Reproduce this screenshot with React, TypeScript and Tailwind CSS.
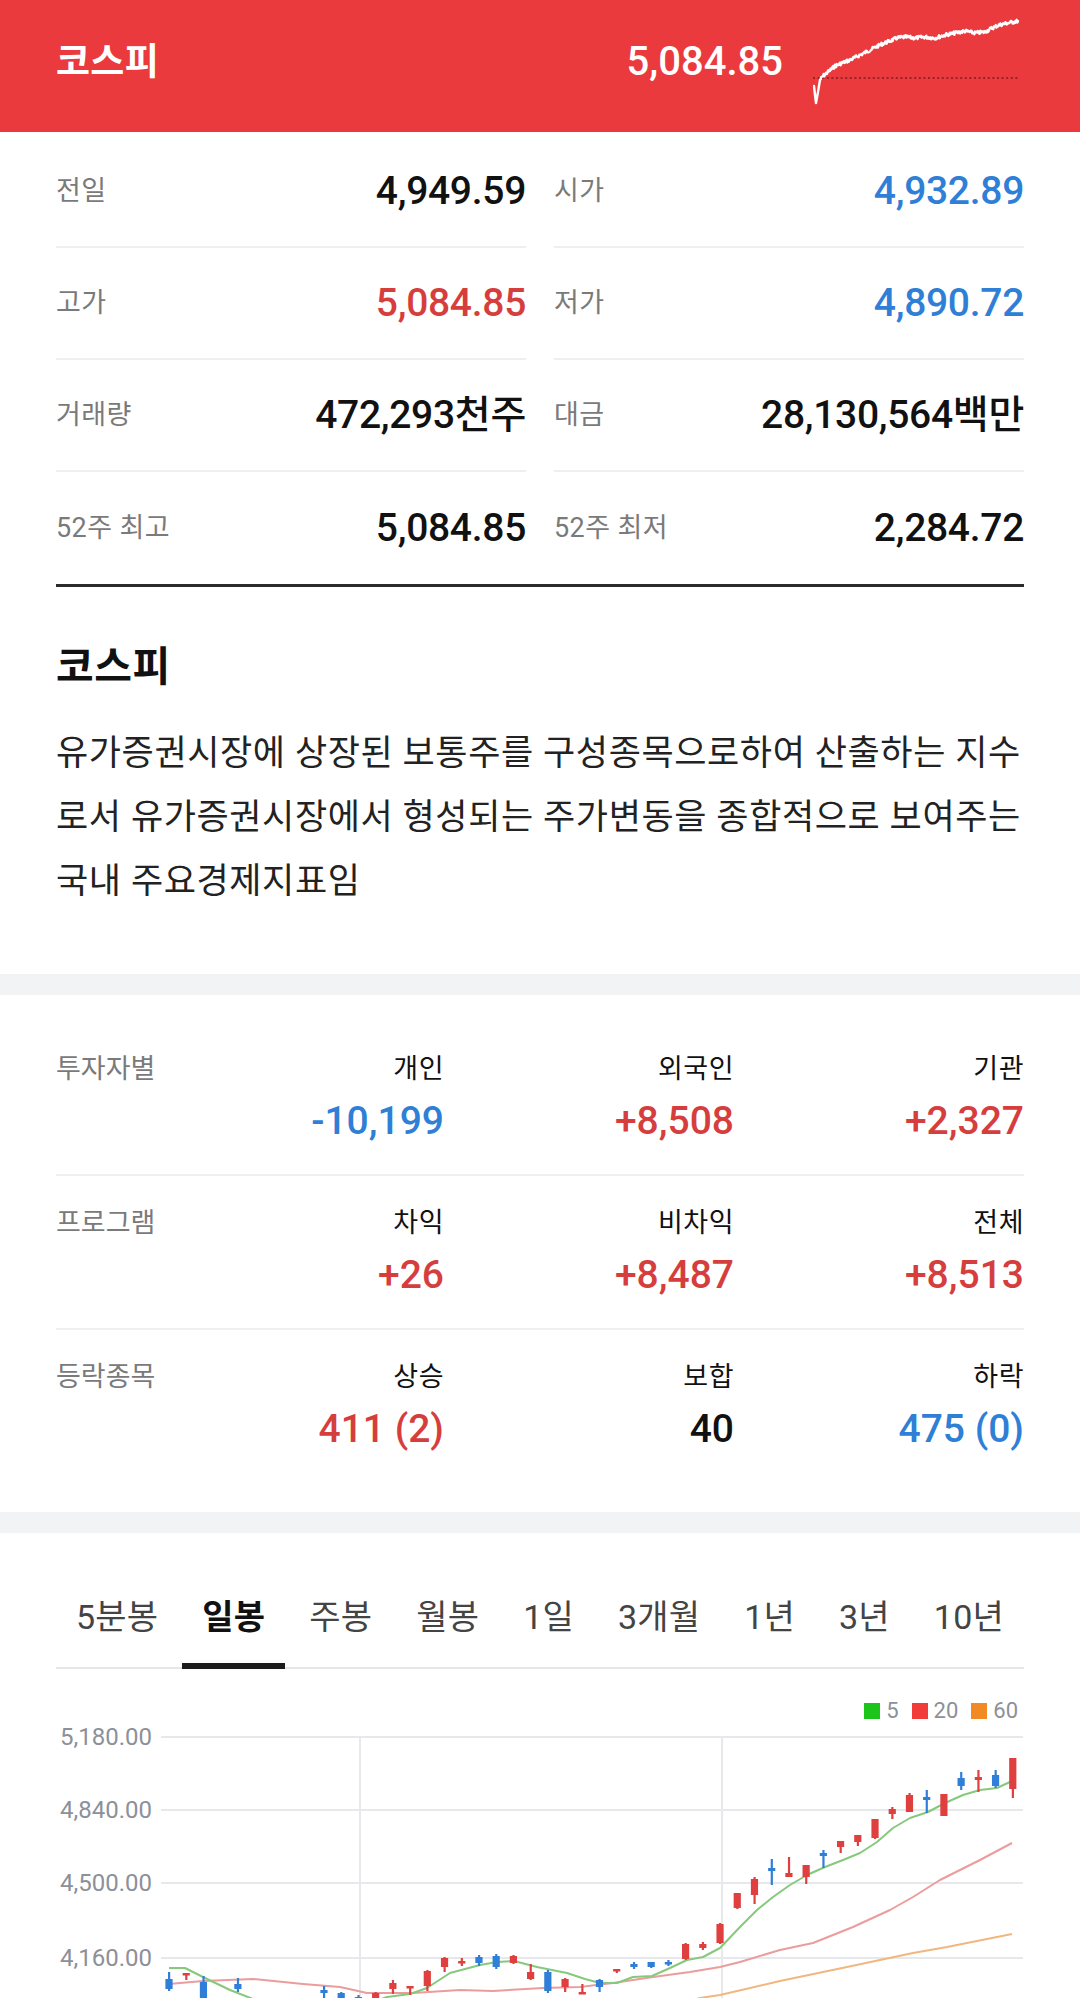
import React from "react";

type Cell = { l: string; v: string; c: string };

const info: Cell[] = [
  { l: "전일", v: "4,949.59", c: "text-[#111111]" },
  { l: "시가", v: "4,932.89", c: "text-[#2f7fd6]" },
  { l: "고가", v: "5,084.85", c: "text-[#d63e3e]" },
  { l: "저가", v: "4,890.72", c: "text-[#2f7fd6]" },
  { l: "거래량", v: "472,293천주", c: "text-[#111111]" },
  { l: "대금", v: "28,130,564백만", c: "text-[#111111]" },
  { l: "52주 최고", v: "5,084.85", c: "text-[#111111]" },
  { l: "52주 최저", v: "2,284.72", c: "text-[#111111]" },
];

const investors = [
  {
    label: "투자자별",
    cols: [
      ["개인", "-10,199", "text-[#2f7fd6]"],
      ["외국인", "+8,508", "text-[#d63e3e]"],
      ["기관", "+2,327", "text-[#d63e3e]"],
    ],
  },
  {
    label: "프로그램",
    cols: [
      ["차익", "+26", "text-[#d63e3e]"],
      ["비차익", "+8,487", "text-[#d63e3e]"],
      ["전체", "+8,513", "text-[#d63e3e]"],
    ],
  },
  {
    label: "등락종목",
    cols: [
      ["상승", "411 (2)", "text-[#d63e3e]"],
      ["보합", "40", "text-[#111111]"],
      ["하락", "475 (0)", "text-[#2f7fd6]"],
    ],
  },
];

const tabs = ["5분봉", "일봉", "주봉", "월봉", "1일", "3개월", "1년", "3년", "10년"];

// candles: [index, color(r/b), bodyTop, bodyBot, wickTop, wickBot]
const candles: [number, string, number, number, number, number][] = [
  [0, "b", 1979, 1989, 1972, 1991],
  [1, "r", 1973, 1975, 1973, 1980],
  [2, "b", 1982, 2005, 1976, 2010],
  [3, "r", 2006, 2016, 2004, 2018],
  [4, "b", 1984, 1989, 1978, 1992],
  [5, "b", 2008, 2018, 2006, 2022],
  [6, "r", 2012, 2020, 2010, 2024],
  [7, "b", 2010, 2016, 2006, 2020],
  [8, "b", 2004, 2012, 2002, 2014],
  [9, "b", 1990, 1993, 1986, 2000],
  [10, "b", 1993, 2003, 1992, 2004],
  [11, "b", 1997, 2005, 1995, 2008],
  [12, "r", 1993, 2005, 1992, 2006],
  [13, "r", 1983, 1989, 1980, 1994],
  [14, "r", 1986, 1988, 1986, 1995],
  [15, "r", 1971, 1986, 1970, 1991],
  [16, "r", 1958, 1967, 1957, 1972],
  [17, "r", 1961, 1963, 1958, 1966],
  [18, "b", 1957, 1963, 1955, 1966],
  [19, "b", 1956, 1967, 1954, 1969],
  [20, "r", 1956, 1963, 1955, 1964],
  [21, "r", 1972, 1979, 1964, 1980],
  [22, "b", 1972, 1991, 1970, 1993],
  [23, "r", 1979, 1987, 1978, 1992],
  [24, "r", 1992, 1994, 1984, 1994],
  [25, "b", 1980, 1987, 1979, 1992],
  [26, "r", 1969, 1971, 1969, 1973],
  [27, "b", 1964, 1967, 1962, 1969],
  [28, "b", 1962, 1967, 1962, 1968],
  [29, "b", 1962, 1964, 1960, 1966],
  [30, "r", 1944, 1959, 1943, 1960],
  [31, "r", 1944, 1948, 1942, 1950],
  [32, "r", 1924, 1943, 1923, 1944],
  [33, "r", 1893, 1908, 1893, 1909],
  [34, "r", 1879, 1895, 1877, 1904],
  [35, "b", 1868, 1871, 1859, 1885],
  [36, "r", 1873, 1877, 1857, 1877],
  [37, "r", 1865, 1877, 1865, 1884],
  [38, "b", 1853, 1856, 1850, 1868],
  [39, "r", 1841, 1847, 1841, 1853],
  [40, "r", 1835, 1842, 1835, 1846],
  [41, "r", 1819, 1838, 1819, 1839],
  [42, "r", 1809, 1814, 1807, 1819],
  [43, "r", 1795, 1812, 1793, 1812],
  [44, "b", 1797, 1800, 1790, 1813],
  [45, "r", 1794, 1816, 1794, 1816],
  [46, "b", 1778, 1786, 1772, 1790],
  [47, "r", 1777, 1780, 1770, 1792],
  [48, "b", 1775, 1786, 1770, 1788],
  [49, "r", 1758, 1789, 1758, 1798],
];

const ma5 = [
  [169, 1968], [185, 1968], [203, 1977], [230, 1990], [253, 1999], [280, 2008], [320, 2012],
  [360, 2006], [387, 1997], [410, 1994], [427, 1988], [450, 1973], [480, 1965], [497, 1962],
  [514, 1961], [537, 1967], [567, 1973], [585, 1979], [600, 1983], [617, 1983], [633, 1977],
  [652, 1976], [670, 1968], [687, 1960], [703, 1957], [720, 1948], [740, 1927], [757, 1910],
  [773, 1897], [790, 1885], [807, 1875], [825, 1867], [843, 1860], [860, 1853], [877, 1842],
  [893, 1828], [910, 1818], [928, 1812], [945, 1803], [963, 1795], [980, 1790], [997, 1788],
  [1012, 1781],
];
const ma20 = [
  [169, 1984], [203, 1981], [253, 1979], [303, 1984], [340, 1987], [367, 1993], [413, 1993],
  [460, 1990], [493, 1991], [543, 1988], [580, 1987], [613, 1983], [653, 1977], [690, 1972],
  [720, 1967], [740, 1962], [780, 1950], [813, 1943], [853, 1927], [890, 1910], [913, 1897],
  [940, 1880], [980, 1860], [1012, 1843],
];
const ma60 = [
  [640, 2015], [700, 1998], [720, 1995], [780, 1981], [847, 1967], [913, 1953], [947, 1947],
  [1012, 1934],
];

const pts = (a: number[][]) => a.map((p) => `${p[0]},${p[1]}`).join(" ");

// sparkline key points (svg coords)
const sparkKeys = [
  [1, 74], [2, 83], [3, 91], [5, 80], [7, 68], [10, 64], [15, 60], [22, 54], [29, 51], [37, 48],
  [45, 44], [53, 40], [61, 36], [69, 32], [77, 29], [84, 26], [92, 25], [102, 26], [112, 25],
  [122, 26], [132, 23], [142, 21], [152, 19], [162, 21], [172, 20], [179, 16], [186, 13],
  [195, 11], [205, 9],
];

function buildSpark(): string {
  let seed = 7;
  const rnd = () => {
    seed = (seed * 9301 + 49297) % 233280;
    return seed / 233280;
  };
  const out: string[] = [];
  for (let k = 0; k < sparkKeys.length - 1; k++) {
    const [x0, y0] = sparkKeys[k];
    const [x1, y1] = sparkKeys[k + 1];
    const steps = Math.max(1, Math.round((x1 - x0) * 1.5));
    for (let s = 0; s < steps; s++) {
      const t = s / steps;
      const x = x0 + (x1 - x0) * t;
      const y = y0 + (y1 - y0) * t + (k > 3 ? (rnd() - 0.5) * 3.6 : 0);
      out.push(`${x.toFixed(2)},${y.toFixed(2)}`);
    }
  }
  const last = sparkKeys[sparkKeys.length - 1];
  out.push(`${last[0]},${last[1]}`);
  return out.join(" ");
}

function Sparkline() {
  return (
    <svg width="210" height="100" viewBox="0 0 210 100" className="block">
      <line x1="0" y1="66" x2="206" y2="66" stroke="#7d1d1f" strokeWidth="1.6" strokeDasharray="2 2.6" />
      <polyline points={buildSpark()} fill="none" stroke="#ffffff" strokeWidth="2.4" strokeLinejoin="round" strokeLinecap="round" />
    </svg>
  );
}

function Chart() {
  const grid = [
    [1737, "5,180.00"],
    [1810, "4,840.00"],
    [1883, "4,500.00"],
    [1958, "4,160.00"],
  ] as const;
  return (
    <svg width="1080" height="278" viewBox="0 1720 1080 278" className="block">
      {grid.map(([y, t]) => (
        <g key={t}>
          <line x1="161" y1={y} x2="1023" y2={y} stroke="#e7e8ec" strokeWidth="2" />
          <text
            x="152"
            y={y}
            textAnchor="end"
            dominantBaseline="central"
            fontSize="24"
            fill="#8c9099"
            fontFamily="Roboto, 'Noto Sans CJK KR', sans-serif"
          >
            {t}
          </text>
        </g>
      ))}
      <line x1="360" y1="1737" x2="360" y2="2000" stroke="#e7e8ec" strokeWidth="2" />
      <line x1="722" y1="1737" x2="722" y2="2000" stroke="#e7e8ec" strokeWidth="2" />
      <polyline points={pts(ma60)} fill="none" stroke="#f1b77f" strokeWidth="2" strokeLinejoin="round" />
      <polyline points={pts(ma20)} fill="none" stroke="#eb9c9c" strokeWidth="2" strokeLinejoin="round" />
      <polyline points={pts(ma5)} fill="none" stroke="#86c97c" strokeWidth="2" strokeLinejoin="round" />
      {candles.map(([i, c, bt, bb, wt, wb]) => {
        const x = 169 + 17.22 * i;
        const col = c === "r" ? "#e03f3f" : "#2f7fd8";
        return (
          <g key={i}>
            <rect x={x - 1} y={wt} width="2.2" height={Math.max(1, wb - wt)} fill={col} />
            <rect x={x - 3.6} y={bt} width="7.2" height={Math.max(2.5, bb - bt)} fill={col} />
          </g>
        );
      })}
    </svg>
  );
}

export default function App() {
  return (
    <div className="w-[1080px] h-[1998px] overflow-hidden bg-white font-[family-name:Roboto,'Noto_Sans_CJK_KR',sans-serif]">
      {/* header */}
      <header className="h-[132px] bg-[#ea3a3e] flex items-center justify-between pl-14 pr-[57px] pb-2">
        <h1 className="text-[37px] font-bold text-white leading-none tracking-[0.3px]">코스피</h1>
        <div className="flex items-center gap-[30px]">
          <span className="text-[40px] font-medium text-white leading-none">5,084.85</span>
          <Sparkline />
        </div>
      </header>

      {/* info table */}
      <section className="px-14 pt-1">
        <div className="grid grid-cols-2 gap-x-7 border-b-[3px] border-[#2b2b2b]">
          {info.map((c, idx) => (
            <div
              key={idx}
              className={
                idx < 6
                  ? "h-[112px] flex items-center justify-between border-b-2 border-[#efefef]"
                  : "h-[112px] flex items-center justify-between"
              }
            >
              <span className="text-[27px] tracking-[0.4px] text-[#7a7a7a]">{c.l}</span>
              <span className={`text-[39px] font-medium tracking-[-0.3px] ${c.c}`}>{c.v}</span>
            </div>
          ))}
        </div>
      </section>

      {/* description */}
      <section className="px-14 pt-[55px] pb-[60px]">
        <h2 className="text-[41px] font-bold text-[#111] leading-[50px] tracking-[0.5px]">코스피</h2>
        <p className="mt-[30px] text-[35px] leading-[64px] text-[#222] tracking-[0.6px]">
          <span className="block whitespace-nowrap">유가증권시장에 상장된 보통주를 구성종목으로하여 산출하는 지수</span>
          <span className="block whitespace-nowrap">로서 유가증권시장에서 형성되는 주가변동을 종합적으로 보여주는</span>
          <span className="block whitespace-nowrap">국내 주요경제지표임</span>
        </p>
      </section>

      <div className="h-[21px] bg-[#f2f3f5]" />

      {/* investors */}
      <section className="px-14 pt-[27px] pb-[28px]">
        {investors.map((row, ri) => (
          <div
            key={row.label}
            className={
              ri < 2
                ? "grid grid-cols-[98px_1fr_1fr_1fr] pt-[29px] pb-[29px] border-b-2 border-[#efefef]"
                : "grid grid-cols-[98px_1fr_1fr_1fr] pt-[29px] pb-[31px]"
            }
          >
            <div className="text-[27px] leading-[36px] text-[#7a7a7a] whitespace-nowrap">{row.label}</div>
            {row.cols.map(([h, v, c]) => (
              <div key={h} className="flex flex-col items-end">
                <span className="text-[27px] leading-[36px] text-[#111] tracking-[0.5px]">{h}</span>
                <span className={`mt-[10px] text-[39px] leading-[48px] font-medium ${c}`}>{v}</span>
              </div>
            ))}
          </div>
        ))}
      </section>

      <div className="h-[21px] bg-[#f2f3f5]" />

      {/* tabs */}
      <section className="px-14 pt-[34px]">
        <div className="flex justify-between border-b-2 border-[#e6e6e6]">
          {tabs.map((t) => (
            <div key={t} className="relative h-[100px] px-5 flex items-center">
              <span
                className={
                  t === "일봉"
                    ? "text-[34px] font-bold text-[#111] tracking-[0.2px]"
                    : "text-[34px] text-[#444] tracking-[0.2px]"
                }
              >
                {t}
              </span>
              {t === "일봉" && (
                <span className="absolute left-0 right-0 bottom-[-2px] h-[6px] bg-[#1c1c1c]" />
              )}
            </div>
          ))}
        </div>
      </section>

      {/* chart */}
      <section>
        <div className="h-[51px] px-14 flex items-end justify-end pr-[62px]">
          <div className="flex items-center gap-[13px] text-[22px] text-[#8c9099] leading-[26px] mb-[-4px]">
            <span className="flex items-center gap-[6px]">
              <span className="w-[16px] h-[16px] bg-[#1cc41c]" />5
            </span>
            <span className="flex items-center gap-[6px]">
              <span className="w-[16px] h-[16px] bg-[#f23b3b]" />20
            </span>
            <span className="flex items-center gap-[6px]">
              <span className="w-[16px] h-[16px] bg-[#f18a23]" />60
            </span>
          </div>
        </div>
        <Chart />
      </section>
    </div>
  );
}
